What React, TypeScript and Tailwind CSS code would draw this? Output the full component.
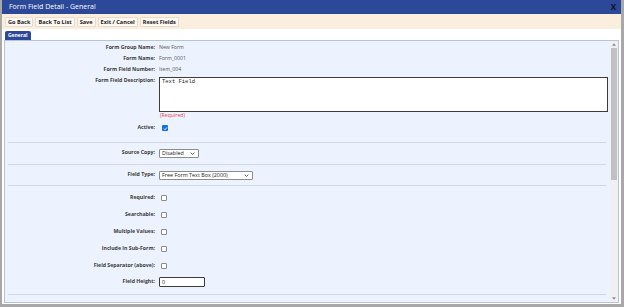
import React from 'react';

const font = "font-['Open_Sans','Liberation_Sans',sans-serif]";

interface RowProps {
  label: string;
  className?: string;
  children?: React.ReactNode;
}

const Row: React.FC<RowProps> = ({ label, className = 'h-[11px] items-center', children }) => (
  <div className={`flex ${className}`}>
    <div className="w-[151px] shrink-0 pr-[1px] text-right text-[5.2px] font-bold text-[#3a3a3a]">{label}</div>
    <div className="ml-[3px] flex items-center">{children}</div>
  </div>
);

const Check: React.FC<{ checked?: boolean }> = ({ checked }) =>
  checked ? (
    <span className="ml-[3px] flex h-[6px] w-[6px] items-center justify-center rounded-[1px] bg-[#1a6fe0]">
      <svg viewBox="0 0 10 10" className="h-[5px] w-[5px]">
        <path d="M2 5.2 L4.2 7.4 L8 2.8" stroke="white" strokeWidth="1.8" fill="none" />
      </svg>
    </span>
  ) : (
    <span className="ml-[2px] block h-[6px] w-[6px] rounded-[1px] border border-[#8a8a8a] bg-white" />
  );

const Select: React.FC<{ value: string; width: string }> = ({ value, width }) => (
  <div className={`flex h-[9px] ${width} items-center justify-between rounded-[1px] border border-[#8c8c8c] bg-white pl-[2px] pr-[3px] text-[5.4px] text-[#222]`}>
    <span>{value}</span>
    <svg viewBox="0 0 8 5" className="h-[3px] w-[5px]">
      <path d="M1 1 L4 4 L7 1" stroke="#222" strokeWidth="1.3" fill="none" />
    </svg>
  </div>
);

const Sep: React.FC<{ className: string }> = ({ className }) => (
  <div className={`mr-[4px] ml-[3px] h-[1px] bg-[#d3d8e2] ${className}`} />
);

const buttons = ['Go Back', 'Back To List', 'Save', 'Exit / Cancel', 'Reset Fields'];

export default function App() {
  return (
    <div className={`h-[307px] w-[624px] overflow-hidden bg-[#a8a8a8] ${font}`}>
      <div className="ml-[2px] flex h-[304px] w-[619px] flex-col bg-white">
        {/* title */}
        <div className="flex h-[14px] items-center justify-between bg-[#2c4898] pl-[7px] pr-[5px] text-[7px] text-white">
          <span>Form Field Detail - General</span>
          <span className="text-[8px] font-bold leading-none text-[#0b1024]">X</span>
        </div>

        {/* toolbar */}
        <div className="flex h-[15px] items-center gap-[2px] bg-[#fbeedd] px-[3px]">
          {buttons.map(b => (
            <span
              key={b}
              className="rounded-[1px] border border-[#e6dccd] bg-[#fdf8f1] px-[2px] text-[5.6px] leading-[8px] font-bold text-[#222]"
            >
              {b}
            </span>
          ))}
        </div>

        {/* tabs */}
        <div className="flex h-[11px] items-end bg-white px-[3px]">
          <span className="rounded-t-[2px] bg-[#2c4898] px-[3px] text-[5px] leading-[9px] font-bold text-white">General</span>
        </div>

        {/* panel */}
        <div className="mx-[2px] flex min-h-0 flex-1 border border-[#b6c2e0] bg-[#edf3fe]">
          <div className="min-w-0 flex-1 overflow-hidden pt-[1px]">
            <Row label="Form Group Name:">
              <span className="text-[5.2px] text-[#555]">New Form</span>
            </Row>
            <Row label="Form Name:">
              <span className="text-[5.2px] text-[#555]">Form_0001</span>
            </Row>
            <Row label="Form Field Number:">
              <span className="text-[5.2px] text-[#555]">Item_004</span>
            </Row>
            <Row label="Form Field Description:" className="mt-[2px] items-start">
              <div className="h-[35px] w-[449px] border-[1.5px] border-[#3c3c3c] bg-white px-[2px] font-['Liberation_Mono',monospace] text-[5.5px] leading-[7px] text-[#222]">
                Text Field
              </div>
            </Row>
            <div className="flex h-[8px] items-center pl-[155px] text-[5.2px] text-[#e8414a]">(Required)</div>
            <Row label="Active:" className="mt-[2px] h-[12px] items-center">
              <Check checked />
            </Row>

            <Sep className="mt-[8px]" />
            <Row label="Source Copy:" className="mt-[4px] h-[12px] items-center">
              <Select value="Disabled" width="w-[40px]" />
            </Row>
            <Sep className="mt-[5px]" />
            <Row label="Field Type:" className="mt-[4px] h-[12px] items-center">
              <Select value="Free Form Text Box (2000)" width="w-[94px]" />
            </Row>
            <Sep className="mt-[4px]" />

            <div className="mt-[3px]">
              {['Required:', 'Searchable:', 'Multiple Values:', 'Include In Sub-Form:', 'Field Separator (above):'].map(l => (
                <Row key={l} label={l} className="h-[17px] items-center">
                  <Check />
                </Row>
              ))}
              <Row label="Field Height:" className="h-[16px] items-center">
                <div className="flex h-[10px] w-[46px] items-center rounded-[1px] border border-[#3c3c3c] bg-white px-[2px] text-[5.4px] text-[#222]">
                  0
                </div>
              </Row>
            </div>
            <Sep className="mt-[4px]" />
            <Row label="Field Width:" className="mt-[4px] h-[11px] items-center" />
          </div>

          {/* scrollbar */}
          <div className="flex w-[8px] flex-col bg-[#f0f0f0]">
            <div className="flex h-[7px] items-center justify-center">
              <svg viewBox="0 0 6 4" className="h-[3px] w-[4px]">
                <path d="M0 4 L3 0 L6 4 Z" fill="#8a8a8a" />
              </svg>
            </div>
            <div className="mx-[1px] h-[132px] bg-[#c1c1c1]" />
            <div className="flex-1" />
            <div className="flex h-[7px] items-center justify-center">
              <svg viewBox="0 0 6 4" className="h-[3px] w-[4px]">
                <path d="M0 0 L3 4 L6 0 Z" fill="#8a8a8a" />
              </svg>
            </div>
          </div>
        </div>
        <div className="h-[1px]" />
      </div>
    </div>
  );
}
